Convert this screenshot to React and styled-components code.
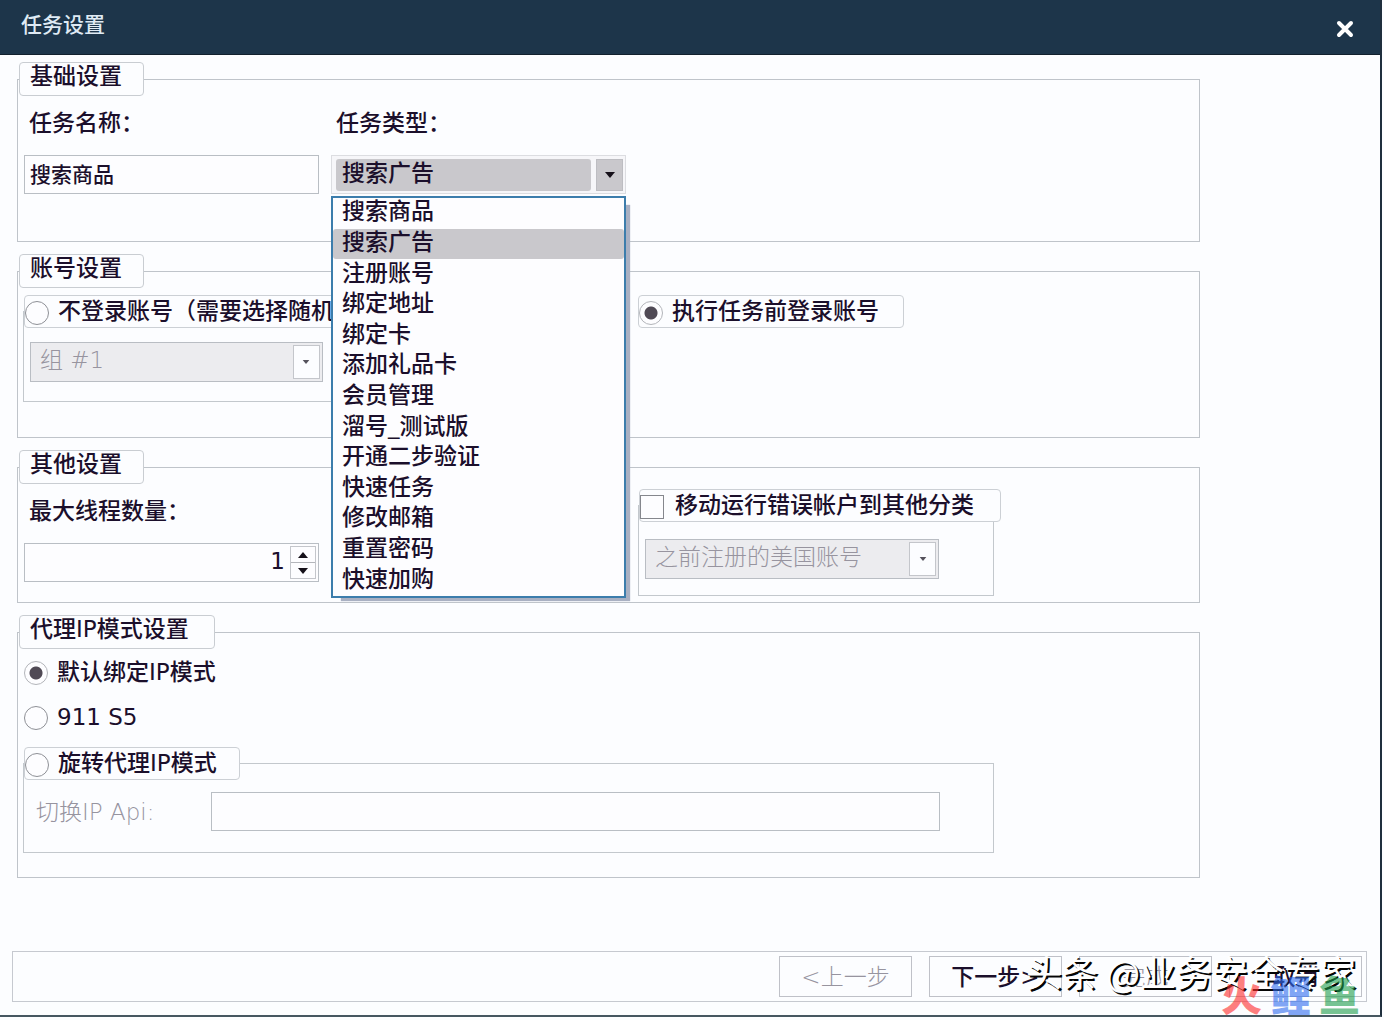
import { useState } from 'react'
import styled, { createGlobalStyle } from 'styled-components'

const GlobalStyle = createGlobalStyle`
    * {
        box-sizing: border-box;
    }
    body {
        margin: 0;
        background: #fcfdff;
    }
    body, input, select, button {
        font-family: "DejaVu Sans", "Noto Sans CJK SC", sans-serif;
        font-size: 23px;
        font-weight: 500;
        color: #1b0f2b;
    }
`
const Window = styled.div`
    position: relative;
    margin-right: 2px;
    border-right: 2px solid #1f2f3d;
    border-bottom: 2px solid #465761;
`
const TitleBar = styled.header`
    display: flex;
    align-items: center;
    justify-content: space-between;
    height: 55px;
    padding: 0 26px 0 21px;
    background: #1d354a;
    border-bottom: 1px solid #12202d;
`
const Title = styled.h1`
    margin: 0 0 4px;
    color: #dfeaf4;
    font-size: 21px;
    font-weight: 500;
    line-height: 30px;
`
const CloseButton = styled.button`
    display: flex;
    margin-top: 4px;
    padding: 0;
    border: none;
    background: none;
`
const Form = styled.form`
    display: flex;
    flex-direction: column;
    gap: 12px;
    padding: 7px 180px 0 17px;
`
const Group = styled.fieldset`
    min-width: 0;
    margin: 0;
    padding: 0 0 ${(props) => props.$bottom}px 6px;
    border: 1px solid #bfc4ca;
`
const Legend = styled.legend`
    height: 34px;
    margin-left: -5px;
    padding: 0 ${(props) => props.$right || 21}px 0 10px;
    border: 1px solid #c9cdd2;
    border-radius: 4px;
    background: #fcfdff;
    line-height: 27px;
`
const Columns = styled.div`
    display: grid;
    grid-template-columns: minmax(0, 295fr) minmax(0, 295fr) minmax(0, 561fr);
    column-gap: 12px;
`
const HalfColumns = styled.div`
    display: grid;
    grid-template-columns: 1fr 1fr;
    column-gap: 10px;
`
const Field = styled.div`
    position: relative;
    padding-top: 12px;
`
const Label = styled.label`
    display: block;
    height: 30px;
    margin-bottom: 17px;
    padding-left: 5px;
    line-height: 30px;
`
const TextInput = styled.input`
    display: block;
    width: 100%;
    height: 39px;
    padding: 0 5px 4px;
    border: 1px solid #b9bec4;
    background: #fdfdff;
    font-size: ${(props) => (props.$small ? '21px' : '23px')};
`
const SelectBox = styled.div`
    display: flex;
    height: ${(props) => (props.$disabled ? '40px' : '39px')};
    padding: ${(props) => (props.$disabled ? '2px 2px 2px 0' : '3px 2px 2px 4px')};
    border: 1px solid ${(props) => (props.$disabled ? '#b9bdc3' : '#dcdde1')};
    background: ${(props) => (props.$disabled ? '#ececef' : '#f6f6f9')};
`
const Select = styled.select`
    flex: 1;
    min-width: 0;
    padding: 0 0 5px ${(props) => (props.disabled ? '9px' : '6px')};
    border: none;
    border-radius: 3px;
    appearance: none;
    background: ${(props) => (props.disabled ? '#ececef' : '#c9c8cc')};
    opacity: 1;
    color: ${(props) => (props.disabled ? '#97949f' : '#1b0f2b')};
    font-weight: ${(props) => (props.disabled ? '300' : '500')};
`
const Arrow = styled.span`
    display: flex;
    align-items: center;
    justify-content: center;
    width: 27px;
    margin-left: ${(props) => (props.$disabled ? '0' : '5px')};
    border: 1px solid ${(props) => (props.$disabled ? '#c4c6cb' : '#bdbdc2')};
    background: ${(props) => (props.$disabled ? '#fcfdff' : '#c9c8cc')};
`
const Menu = styled.ul`
    position: absolute;
    z-index: 2;
    top: 100px;
    left: 0;
    right: 0;
    display: flex;
    flex-direction: column;
    height: 402px;
    margin: 0;
    padding: 0;
    list-style: none;
    border: 2px solid #3c7dac;
    background: #fdfdff;
    box-shadow: 7px 6px 1px -3px #a9b0c2;
`
const MenuItem = styled.li`
    display: flex;
    flex: 1;
    align-items: center;
    padding: 0 0 4px 9px;
    border-radius: 3px;
    background: ${(props) => (props.$active ? '#c9c8cc' : 'transparent')};
    line-height: 26px;
`
const SubGroup = styled.fieldset`
    min-width: 0;
    margin: ${(props) => props.$margin};
    padding: ${(props) => props.$padding};
    border: 1px solid #c3c8cd;
`
const WideSubGroup = styled(SubGroup)`
    grid-column: span 2;
`
const ChoiceLegend = styled.legend`
    width: max-content;
    margin-left: -${(props) => props.$pull}px;
    padding: 0;
    border: 1px solid #ccd0d5;
    border-radius: 4px;
    background: #fcfdff;
`
const ChoiceBox = styled.div`
    width: max-content;
    height: 33px;
    margin-top: 7px;
    border: 1px solid #ccd0d5;
    border-radius: 4px;
`
const Choice = styled.label`
    display: flex;
    align-items: center;
    gap: 9px;
    height: ${(props) => (props.$tall ? '45px' : '31px')};
    padding-right: ${(props) => props.$right || 0}px;
    white-space: nowrap;
`
const ChoiceText = styled.span`
    padding-bottom: ${(props) => (props.$low ? '0' : '2px')};
    line-height: 28px;
`
const Radio = styled.input`
    flex: none;
    width: 24px;
    height: 24px;
    margin: 2px 0 0;
    border: 1px solid #8e9096;
    border-radius: 50%;
    appearance: none;
    background: #fdfdff;

    &:checked {
        border-color: #b3b5ba;
        background: radial-gradient(circle, #504a55 6px, #fdfdff 7px);
    }
`
const Checkbox = styled.input`
    flex: none;
    width: 24px;
    height: 24px;
    margin: 2px 2px 0 0;
    border: 1px solid #85878d;
    appearance: none;
    background: #fdfdff;
`
const Spinner = styled.div`
    display: flex;
    height: 39px;
    padding: 2px;
    border: 1px solid #b9bec4;
    background: #fdfdff;
`
const SpinnerInput = styled.input`
    flex: 1;
    min-width: 0;
    padding: 0 5px 3px;
    border: none;
    background: none;
    text-align: right;
`
const SpinnerButtons = styled.div`
    display: flex;
    flex-direction: column;
    width: 26px;
    border: 1px solid #c4c6cb;
`
const SpinnerButton = styled.button`
    display: flex;
    flex: 1;
    align-items: center;
    justify-content: center;
    padding: 0;
    border: none;
    background: #fdfdff;

    & + & {
        border-top: 1px solid #b4b6bb;
    }
`
const ApiRow = styled.div`
    display: grid;
    grid-template-columns: 175px 1fr;
    align-items: center;
`
const ApiLabel = styled.label`
    padding-bottom: 4px;
    color: #97949f;
    font-weight: 300;
`
const Footer = styled.footer`
    display: flex;
    justify-content: flex-end;
    gap: 17px;
    margin: 73px 13px 13px 12px;
    padding: 4px;
    border: 1px solid #c6c9d0;
`
const FooterButton = styled.button`
    width: 133px;
    height: 41px;
    padding: 0 0 4px;
    border: 1px solid #bfc1c8;
    background: #fcfdff;
    color: ${(props) => (props.disabled ? '#97949f' : '#1b0f2b')};
    font-weight: ${(props) => (props.disabled ? '300' : '500')};
`
const Credit = styled.div`
    position: absolute;
    z-index: 3;
    right: 24px;
    bottom: 21px;
    color: #fff;
    font-family: "Noto Sans CJK SC", sans-serif;
    font-size: 36px;
    font-weight: 400;
    line-height: 46px;
    text-shadow: 2px 2px 0 #050505;
    white-space: nowrap;
    pointer-events: none;
`
const Brand = styled.div`
    position: absolute;
    z-index: 4;
    right: 20px;
    bottom: -2px;
    display: flex;
    gap: 8px;
    font-family: "Noto Sans CJK SC", sans-serif;
    font-size: 41px;
    font-weight: 900;
    line-height: 48px;
    opacity: 0.6;
    pointer-events: none;
`
const BrandGlyph = styled.span`
    color: ${(props) => props.$color};
`

const taskTypes = [
    '搜索商品',
    '搜索广告',
    '注册账号',
    '绑定地址',
    '绑定卡',
    '添加礼品卡',
    '会员管理',
    '溜号_测试版',
    '开通二步验证',
    '快速任务',
    '修改邮箱',
    '重置密码',
    '快速加购',
]

const Triangle = ({ up, small }) => (
    <svg width={small ? 8 : 10} height={small ? 4 : 6} viewBox="0 0 10 6" aria-hidden="true">
        <path d={up ? 'M0 6 L5 0 L10 6 Z' : 'M0 0 L10 0 L5 6 Z'} fill={small ? '#55525c' : '#151019'} />
    </svg>
)

const DisabledSelect = ({ label, value }) => (
    <SelectBox $disabled>
        <Select disabled aria-label={label} defaultValue={value}>
            <option>{value}</option>
        </Select>
        <Arrow $disabled>
            <Triangle small />
        </Arrow>
    </SelectBox>
)

const App = () => {
    const [type, setType] = useState('搜索广告')
    const [threads, setThreads] = useState(1)
    const [login, setLogin] = useState('before')
    const [proxy, setProxy] = useState('default')

    return (
        <>
            <GlobalStyle />
            <Window>
                <TitleBar>
                    <Title>任务设置</Title>
                    <CloseButton type="button" aria-label="关闭">
                        <svg width="18" height="18" viewBox="0 0 18 18">
                            <path d="M3 3 L15 15 M15 3 L3 15" stroke="#fff" strokeWidth="4" strokeLinecap="round" />
                        </svg>
                    </CloseButton>
                </TitleBar>

                <Form>
                    <Group $bottom={47}>
                        <Legend>基础设置</Legend>
                        <Columns>
                            <Field>
                                <Label htmlFor="name">任务名称：</Label>
                                <TextInput id="name" $small defaultValue="搜索商品" />
                            </Field>
                            <Field>
                                <Label htmlFor="type">任务类型：</Label>
                                <SelectBox>
                                    <Select id="type" value={type} onChange={(e) => setType(e.target.value)}>
                                        {taskTypes.map((item) => (
                                            <option key={item}>{item}</option>
                                        ))}
                                    </Select>
                                    <Arrow>
                                        <Triangle />
                                    </Arrow>
                                </SelectBox>
                                <Menu>
                                    {taskTypes.map((item) => (
                                        <MenuItem key={item} $active={item === type} onClick={() => setType(item)}>
                                            {item}
                                        </MenuItem>
                                    ))}
                                </Menu>
                            </Field>
                        </Columns>
                    </Group>

                    <Group $bottom={35}>
                        <Legend>账号设置</Legend>
                        <Columns>
                            <WideSubGroup $margin="7px 0 0 -1px" $padding="14px 0 19px 6px">
                                <ChoiceLegend $pull={6}>
                                    <Choice $right={20}>
                                        <Radio
                                            type="radio"
                                            name="login"
                                            checked={login === 'none'}
                                            onChange={() => setLogin('none')}
                                        />
                                        <ChoiceText>不登录账号（需要选择随机</ChoiceText>
                                    </Choice>
                                </ChoiceLegend>
                                <HalfColumns>
                                    <DisabledSelect label="组" value="组 #1" />
                                </HalfColumns>
                            </WideSubGroup>
                            <ChoiceBox>
                                <Choice $right={24}>
                                    <Radio
                                        type="radio"
                                        name="login"
                                        checked={login === 'before'}
                                        onChange={() => setLogin('before')}
                                    />
                                    <ChoiceText>执行任务前登录账号</ChoiceText>
                                </Choice>
                            </ChoiceBox>
                        </Columns>
                    </Group>

                    <Group $bottom={6}>
                        <Legend>其他设置</Legend>
                        <Columns>
                            <Field>
                                <Label htmlFor="threads">最大线程数量：</Label>
                                <Spinner>
                                    <SpinnerInput
                                        id="threads"
                                        value={threads}
                                        onChange={(e) => setThreads(Number(e.target.value) || 1)}
                                    />
                                    <SpinnerButtons>
                                        <SpinnerButton
                                            type="button"
                                            aria-label="增加"
                                            onClick={() => setThreads(threads + 1)}
                                        >
                                            <Triangle up />
                                        </SpinnerButton>
                                        <SpinnerButton
                                            type="button"
                                            aria-label="减少"
                                            onClick={() => setThreads(Math.max(1, threads - 1))}
                                        >
                                            <Triangle />
                                        </SpinnerButton>
                                    </SpinnerButtons>
                                </Spinner>
                            </Field>
                            <div />
                            <SubGroup $margin="5px 205px 0 0" $padding="17px 54px 16px 6px">
                                <ChoiceLegend $pull={6}>
                                    <Choice $right={26}>
                                        <Checkbox type="checkbox" />
                                        <ChoiceText>移动运行错误帐户到其他分类</ChoiceText>
                                    </Choice>
                                </ChoiceLegend>
                                <DisabledSelect label="分类" value="之前注册的美国账号" />
                            </SubGroup>
                        </Columns>
                    </Group>

                    <Group $bottom={24}>
                        <Legend $right={25}>代理IP模式设置</Legend>
                        <Choice $tall>
                            <Radio
                                type="radio"
                                name="proxy"
                                checked={proxy === 'default'}
                                onChange={() => setProxy('default')}
                            />
                            <ChoiceText $low>默认绑定IP模式</ChoiceText>
                        </Choice>
                        <Choice $tall>
                            <Radio
                                type="radio"
                                name="proxy"
                                checked={proxy === '911'}
                                onChange={() => setProxy('911')}
                            />
                            <ChoiceText $low>911 S5</ChoiceText>
                        </Choice>
                        <SubGroup $margin="8px 205px 0 -1px" $padding="12px 53px 21px 12px">
                            <ChoiceLegend $pull={12}>
                                <Choice $right={22}>
                                    <Radio
                                        type="radio"
                                        name="proxy"
                                        checked={proxy === 'rotate'}
                                        onChange={() => setProxy('rotate')}
                                    />
                                    <ChoiceText>旋转代理IP模式</ChoiceText>
                                </Choice>
                            </ChoiceLegend>
                            <ApiRow>
                                <ApiLabel htmlFor="api">切换IP Api:</ApiLabel>
                                <TextInput id="api" />
                            </ApiRow>
                        </SubGroup>
                    </Group>
                </Form>

                <Footer>
                    <FooterButton type="button" disabled>
                        &lt;上一步
                    </FooterButton>
                    <FooterButton type="button">下一步&gt;</FooterButton>
                    <FooterButton type="button" disabled>
                        完成
                    </FooterButton>
                    <FooterButton type="button">取消</FooterButton>
                </Footer>

                <Credit>头条 @业务安全专家</Credit>
                <Brand>
                    <BrandGlyph $color="#ff2b2b">火</BrandGlyph>
                    <BrandGlyph $color="#2f6cf0">鲤</BrandGlyph>
                    <BrandGlyph $color="#1e9e4c">鱼</BrandGlyph>
                </Brand>
            </Window>
        </>
    )
}

export default App
